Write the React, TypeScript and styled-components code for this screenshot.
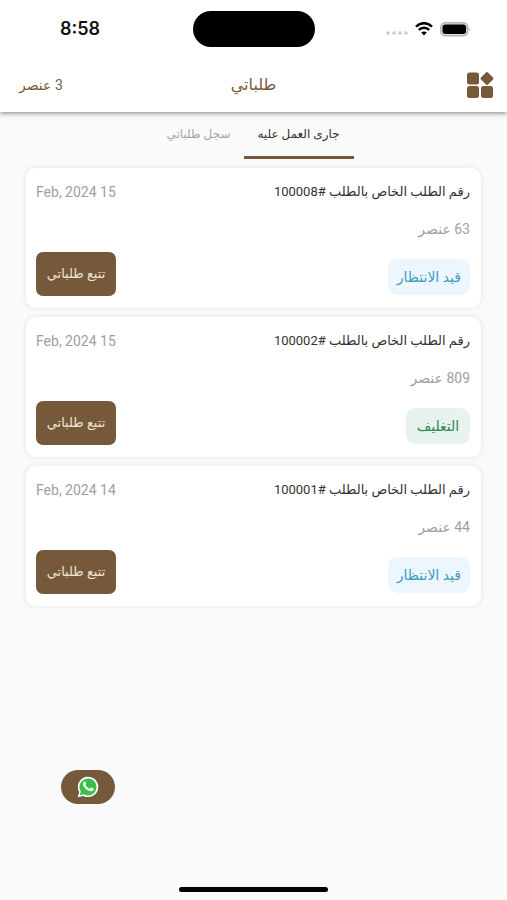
import React, { useState } from "react";
import styled, { createGlobalStyle } from "styled-components";

const brown = "#76593a";

const GlobalStyle = createGlobalStyle`
  * { box-sizing: border-box; }
  body {
    margin: 0;
    background: #fafafa;
    font-family: Roboto, "Noto Sans", "DejaVu Sans", sans-serif;
  }
  button { font-family: inherit; border: 0; padding: 0; cursor: pointer; }
`;

const Screen = styled.div`
  display: flex;
  flex-direction: column;
  min-height: 100vh;
`;

const Top = styled.header`
  background: #fff;
  box-shadow: 0 1px 5px rgba(0, 0, 0, 0.5);
`;

const StatusBar = styled.div`
  display: grid;
  grid-template-columns: 1fr auto 1fr;
  align-items: center;
  height: 58px;
  padding: 0 36px;
  direction: ltr;
`;

const Clock = styled.time`
  padding-left: 24px;
  font: 600 18px/24px Inter, sans-serif;
  color: #111;
`;

const Island = styled.div`
  width: 122px;
  height: 36px;
  border-radius: 18px;
  background: #000;
`;

const Signals = styled.div`
  display: flex;
  align-items: center;
  justify-content: flex-end;
  gap: 7px;
`;

const AppBar = styled.div`
  display: grid;
  grid-template-columns: 1fr auto 1fr;
  align-items: center;
  height: 54px;
  padding: 0 13px;
  color: ${brown};
`;

const MenuButton = styled.button`
  display: flex;
  justify-self: start;
  background: none;
`;

const Title = styled.h1`
  margin: 0;
  font-size: 16px;
  font-weight: 400;
  line-height: 24px;
`;

const Total = styled.span`
  justify-self: end;
  padding-left: 6px;
  font-size: 14px;
  line-height: 24px;
`;

const Tabs = styled.div`
  display: flex;
  justify-content: center;
  height: 47px;
`;

const Tab = styled.button<{ $active: boolean; $width: number }>`
  min-width: ${(p) => p.$width}px;
  border-bottom: 3px solid ${(p) => (p.$active ? brown : "transparent")};
  background: none;
  color: ${(p) => (p.$active ? "#333" : "#a5a5a5")};
  font-size: 12px;
  line-height: 20px;
`;

const Orders = styled.ul`
  display: flex;
  flex-direction: column;
  gap: 9px;
  margin: 0;
  padding: 9px 26px;
  list-style: none;
`;

const Card = styled.li`
  display: flex;
  justify-content: space-between;
  min-height: 140px;
  padding: 12px 11px 12px 10px;
  border-radius: 10px;
  background: #fff;
  box-shadow: 0 0 3px 2px #f0f0f0;
`;

const Column = styled.div<{ $end?: boolean }>`
  display: flex;
  flex-direction: column;
  align-items: ${(p) => (p.$end ? "flex-end" : "flex-start")};
  justify-content: ${(p) => (p.$end ? "space-between" : "flex-start")};
`;

const OrderName = styled.h2`
  margin: 0;
  color: #333;
  font-size: 13px;
  font-weight: 400;
  line-height: 24px;
`;

const Count = styled.span`
  margin: 13px 0 18px;
  color: #a0a0a0;
  font-size: 14px;
  line-height: 24px;
`;

const Badge = styled.span<{ $tone: "waiting" | "packing" }>`
  min-width: 64px;
  padding: 6px 9px;
  border-radius: 9px;
  background: ${(p) => (p.$tone === "waiting" ? "#eef6fd" : "#e9f3ee")};
  color: ${(p) => (p.$tone === "waiting" ? "#3a9cc1" : "#328558")};
  font-size: 14px;
  line-height: 24px;
  text-align: center;
`;

const OrderDate = styled.time`
  color: #a0a0a0;
  font-size: 14px;
  line-height: 24px;
`;

const TrackButton = styled.button`
  min-width: 80px;
  height: 44px;
  border-radius: 7px;
  background: ${brown};
  color: #eee2d5;
  font-size: 13px;
  line-height: 24px;
`;

const ChatButton = styled.button`
  position: fixed;
  bottom: 96px;
  left: 61px;
  display: flex;
  align-items: center;
  justify-content: center;
  width: 54px;
  height: 34px;
  border-radius: 17px;
  background: ${brown};
`;

const HomeIndicator = styled.div`
  align-self: center;
  width: 149px;
  height: 5px;
  margin: auto 0 8px;
  border-radius: 3px;
  background: #000;
`;

type Order = { id: string; count: number; date: string; status: string; tone: "waiting" | "packing" };

const orders: Order[] = [
  { id: "100008", count: 63, date: "15 Feb, 2024", status: "قيد الانتظار", tone: "waiting" },
  { id: "100002", count: 809, date: "15 Feb, 2024", status: "التغليف", tone: "packing" },
  { id: "100001", count: 44, date: "14 Feb, 2024", status: "قيد الانتظار", tone: "waiting" },
];

const tabs = [
  { label: "جارى العمل عليه", width: 110 },
  { label: "سجل طلباتي", width: 90 },
];

const SignalIcons = () => (
  <Signals>
    <svg width="22" height="14" viewBox="0 0 22 14" fill="#c9c9c9" aria-hidden="true">
      <circle cx="2" cy="11" r="1.8" />
      <circle cx="8" cy="11" r="1.8" />
      <circle cx="14" cy="11" r="1.8" />
      <circle cx="20" cy="11" r="1.8" />
    </svg>
    <svg width="18" height="14" viewBox="0 0 18 14" fill="none" stroke="#000" strokeWidth="2.5" aria-hidden="true">
      <path d="M1 4.6C5.6 0 12.4 0 17 4.6" />
      <path d="M3.8 7.9C6.7 5 11.3 5 14.2 7.9" />
      <path d="M6.2 10.5C7.8 9 10.2 9 11.8 10.5L9 13.4Z" fill="#000" stroke="none" />
    </svg>
    <svg width="31" height="15" viewBox="0 0 31 15" aria-hidden="true">
      <rect x=".8" y=".8" width="27" height="13" rx="4.5" fill="#ddd" stroke="#b5b5b5" strokeWidth="1.5" />
      <rect x="2.5" y="2.5" width="23.6" height="9.6" rx="3" fill="#000" />
      <path d="M29.2 5.4Q31 7.3 29.2 9.2Z" fill="#aaa" />
    </svg>
  </Signals>
);

const MenuIcon = () => (
  <svg width="28" height="28" viewBox="0 0 28 28" fill={brown} aria-hidden="true">
    <rect x="1" y="1.5" width="12" height="12" rx="2.5" />
    <rect x="1" y="15" width="12" height="12" rx="2.5" />
    <rect x="15" y="15" width="12" height="12" rx="2.5" />
    <rect x="16" y="2.5" width="10" height="10" rx="1.8" transform="rotate(45 21 7.5)" />
  </svg>
);

const WhatsAppIcon = () => (
  <svg width="22" height="22" viewBox="0 0 22 22" aria-hidden="true">
    <path d="M.8 21.2 2.2 15.9A10.2 10.2 0 1 1 6.3 19.9Z" fill="#fff" />
    <path d="M2.8 19.2 3.8 15.6A8.5 8.5 0 1 1 6.6 18.3Z" fill="#3bbf4c" />
    <path
      d="M7.2 5.7C7.7 5.2 8.3 5.5 8.5 6L9.2 7.6C9.4 8 8.7 8.7 8.5 9C9.3 10.7 10.8 12.1 12.7 12.8L13.8 11.6C14 11.4 14.3 11.4 14.5 11.5L16.4 12.4C17 12.7 16.5 14 16 14.6C15 15.6 13.3 15.5 11.4 14.6C8.9 13.4 7.2 11.5 6.3 9.5C5.7 8.1 6 6.7 7.2 5.7Z"
      fill="#fff"
    />
  </svg>
);

export default function App() {
  const [active, setActive] = useState(0);
  return (
    <>
      <GlobalStyle />
      <Screen dir="rtl" lang="ar">
        <Top>
          <StatusBar>
            <Clock>8:58</Clock>
            <Island />
            <SignalIcons />
          </StatusBar>
          <AppBar>
            <MenuButton aria-label="القائمة">
              <MenuIcon />
            </MenuButton>
            <Title>طلباتي</Title>
            <Total>3 عنصر</Total>
          </AppBar>
        </Top>
        <Tabs role="tablist">
          {tabs.map((tab, i) => (
            <Tab
              key={tab.label}
              role="tab"
              aria-selected={active === i}
              $active={active === i}
              $width={tab.width}
              onClick={() => setActive(i)}
            >
              {tab.label}
            </Tab>
          ))}
        </Tabs>
        <Orders>
          {orders.map((order) => (
            <Card key={order.id}>
              <Column>
                <OrderName>رقم الطلب الخاص بالطلب #{order.id}</OrderName>
                <Count>{order.count} عنصر</Count>
                <Badge $tone={order.tone}>{order.status}</Badge>
              </Column>
              <Column $end>
                <OrderDate>{order.date}</OrderDate>
                <TrackButton>تتبع طلباتي</TrackButton>
              </Column>
            </Card>
          ))}
        </Orders>
        <ChatButton aria-label="واتساب">
          <WhatsAppIcon />
        </ChatButton>
        <HomeIndicator />
      </Screen>
    </>
  );
}
